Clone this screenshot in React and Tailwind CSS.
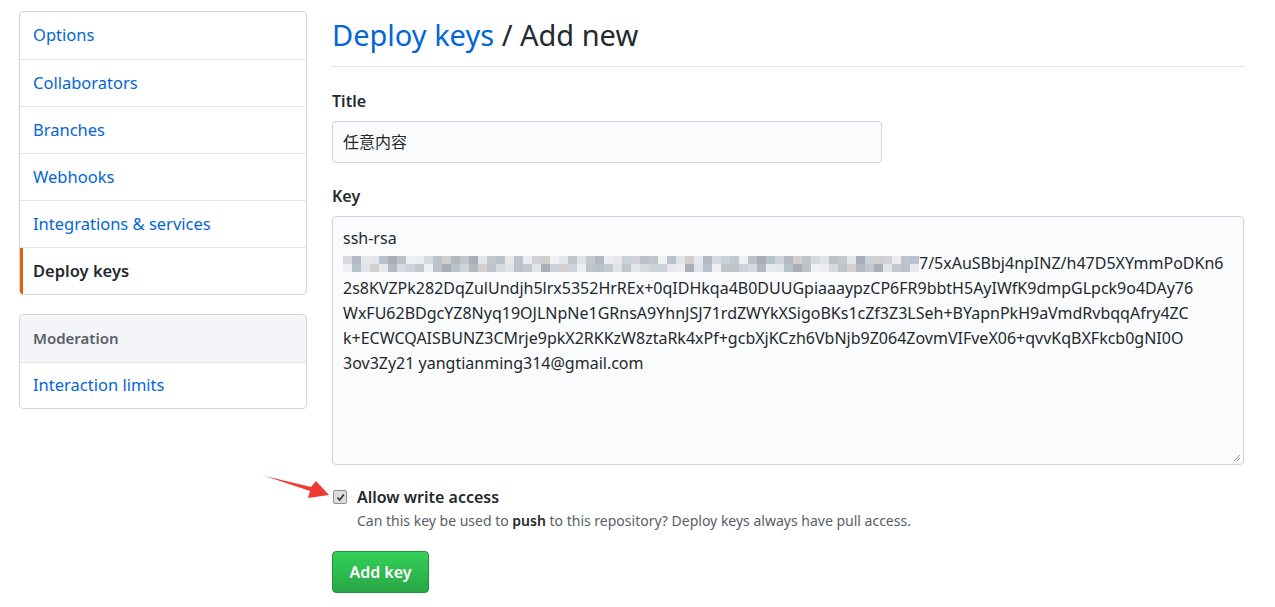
import React from "react";

const MENU = [
  { key: "options", label: "Options" },
  { key: "collaborators", label: "Collaborators" },
  { key: "branches", label: "Branches" },
  { key: "webhooks", label: "Webhooks" },
  { key: "integrations", label: "Integrations & services" },
  { key: "deploy", label: "Deploy keys", active: true },
];

const KEY_LINES = [
  "2s8KVZPk282DqZulUndjh5lrx5352HrREx+0qIDHkqa4B0DUUGpiaaaypzCP6FR9bbtH5AyIWfK9dmpGLpck9o4DAy76",
  "WxFU62BDgcYZ8Nyq19OJLNpNe1GRnsA9YhnJSJ71rdZWYkXSigoBKs1cZf3Z3LSeh+BYapnPkH9aVmdRvbqqAfry4ZC",
  "k+ECWCQAISBUNZ3CMrje9pkX2RKKzW8ztaRk4xPf+gcbXjKCzh6VbNjb9Z064ZovmVIFveX06+qvvKqBXFkcb0gNI0O",
  "3ov3Zy21 yangtianming314@gmail.com",
];

// mosaic colours for the blurred part of the key
const BLUR = [
  "#d6d9de", "#c4c8cf", "#e6e8eb", "#a9aeb8", "#cfd3d9", "#eef0f2", "#bfc4cc",
  "#dfe2e6", "#b3b8c1", "#e2e5e9", "#c9d3dc", "#bcc2ca", "#ebedf0", "#b6c3cf",
  "#d3cfcc", "#c1c5cc",
];

function Blurred() {
  const rows = [0, 1];
  return (
    <span className="inline-flex flex-col">
      {rows.map((r) => (
        <span key={r} className="flex">
          {Array.from({ length: 64 }).map((_, i) => (
            <span
              key={i}
              className="inline-block h-[8px] w-[9px]"
              style={{ background: BLUR[(i * 7 + r * 5 + ((i * i) % 5)) % BLUR.length] }}
            />
          ))}
        </span>
      ))}
    </span>
  );
}

export default function App() {
  return (
    <div className="min-h-screen bg-white font-['Noto_Sans',sans-serif] text-[#24292e]">
      <div className="flex gap-[25px] pl-[19px] pt-[11px] pr-[31px]">
        {/* Sidebar */}
        <aside className="w-[288px] shrink-0">
          <nav className="rounded border border-[#d1d5da] overflow-hidden">
            {MENU.map((item, i) => (
              <div
                key={item.key}
                className={`relative flex h-[47px] items-center pl-[13px] text-[16.5px] ${
                  i > 0 ? "border-t border-[#e1e4e8]" : ""
                } ${item.active ? "font-semibold text-[#24292e]" : "text-[#0366d6]"}`}
              >
                {item.active && (
                  <span className="absolute left-0 top-0 bottom-0 w-[3px] bg-[#e36209]" />
                )}
                {item.label}
              </div>
            ))}
          </nav>

          <nav className="mt-[19px] rounded border border-[#d1d5da] overflow-hidden">
            <div className="flex h-[47px] items-center bg-[#f3f5f8] pl-[13px] text-[15px] font-semibold text-[#586069]">
              Moderation
            </div>
            <div className="flex h-[46px] items-center border-t border-[#e1e4e8] pl-[13px] text-[16.5px] text-[#0366d6]">
              Interaction limits
            </div>
          </nav>
        </aside>

        {/* Main */}
        <main className="flex-1">
          <h1 className="border-b border-[#e1e4e8] pb-[8px] text-[29px] leading-[47px]">
            <span className="text-[#0366d6]">Deploy keys</span> / Add new
          </h1>

          <div className="mt-[22px]">
            <label className="block text-[16px] font-semibold leading-[24px]">Title</label>
            <div className="mt-[8px] flex h-[42px] w-[550px] items-center rounded border border-[#d1d5da] bg-[#fafbfc] pl-[10px] text-[16px] font-['Noto_Sans','Noto_Sans_CJK_SC',sans-serif]">
              任意内容
            </div>
          </div>

          <div className="mt-[21px]">
            <label className="block text-[16px] font-semibold leading-[24px]">Key</label>
            <div className="relative mt-[8px] h-[249px] rounded border border-[#d1d5da] bg-[#fafbfc] px-[10px] pt-[9px] text-[16px] leading-[25px] whitespace-nowrap overflow-hidden">
              <div>ssh-rsa</div>
              <div className="flex h-[25px] items-center">
                <Blurred />
                <span>7/5xAuSBbj4npINZ/h47D5XYmmPoDKn6</span>
              </div>
              {KEY_LINES.map((line) => (
                <div key={line}>{line}</div>
              ))}
              <svg className="absolute right-[2px] bottom-[2px]" width="9" height="9" viewBox="0 0 9 9">
                <path d="M8 2 L2 8 M8 5 L5 8" stroke="#9a9a9a" strokeWidth="1" />
              </svg>
            </div>
          </div>

          {/* Checkbox */}
          <div className="relative mt-[20px] pl-[25px]">
            <svg
              className="absolute left-[-68px] top-[-10px]"
              width="68"
              height="26"
              viewBox="0 0 68 26"
            >
              <path d="M1 1 L47 12 L52 6 L65 20 L44 23 L46 16 Z" fill="#f03a36" />
            </svg>
            <span className="absolute left-[1px] top-[5px] flex h-[14px] w-[14px] items-center justify-center rounded-[2px] border border-[#8f8f8f] bg-[#dcdcdc]">
              <svg width="9" height="9" viewBox="0 0 9 9">
                <path d="M1.5 4.5 L3.7 7 L7.8 1.5" stroke="#333" strokeWidth="1.6" fill="none" />
              </svg>
            </span>
            <div className="text-[16px] font-semibold leading-[24px]">Allow write access</div>
            <div className="text-[14px] leading-[23px] text-[#586069]">
              Can this key be used to <span className="font-semibold text-[#24292e]">push</span> to this repository? Deploy keys always have pull access.
            </div>
          </div>

          <button className="mt-[19px] h-[42px] w-[97px] rounded border border-[#23943d] bg-gradient-to-b from-[#34d058] to-[#28a745] text-[16px] font-semibold text-white">
            Add key
          </button>
        </main>
      </div>
    </div>
  );
}
